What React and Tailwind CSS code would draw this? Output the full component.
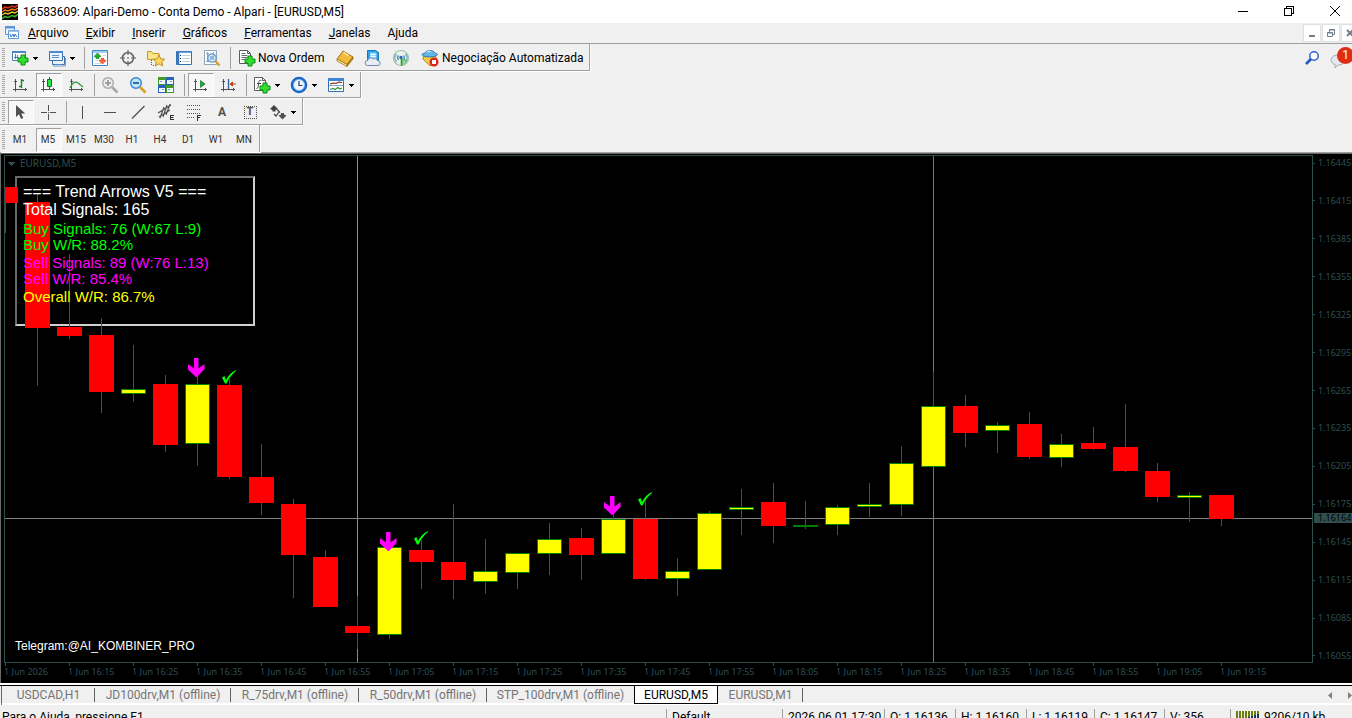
const UI = "font-['Roboto','Open_Sans',sans-serif]"

// [high, bodyTop, bodyBottom, low, rising]
const CANDLES = [
  [187, 187, 203, 233, 0],
  [194, 202, 328, 386, 0],
  [254, 327, 336, 339, 0],
  [318, 335, 392, 413, 0],
  [345, 389, 394, 402, 1],
  [375, 384, 445, 452, 0],
  [376, 384, 444, 466, 1],
  [379, 385, 477, 479, 0],
  [444, 477, 503, 515, 0],
  [499, 504, 555, 598, 0],
  [550, 557, 607, 607, 0],
  [596, 626, 633, 649, 0],
  [547, 547, 635, 639, 1],
  [540, 550, 562, 589, 0],
  [504, 562, 580, 599, 0],
  [539, 571, 582, 594, 1],
  [553, 553, 573, 589, 1],
  [523, 539, 554, 575, 1],
  [528, 538, 555, 580, 0],
  [513, 519, 554, 554, 1],
  [501, 519, 579, 580, 0],
  [558, 571, 579, 596, 1],
  [511, 513, 570, 570, 1],
  [489, 507, 510, 535, 1],
  [483, 502, 526, 543, 0],
  [501, 525, 527, 529, 1],
  [505, 507, 525, 535, 1],
  [483, 504, 507, 517, 1],
  [446, 463, 505, 516, 1],
  [372, 406, 467, 467, 1],
  [395, 406, 433, 447, 0],
  [422, 425, 431, 453, 1],
  [412, 424, 457, 459, 0],
  [434, 444, 458, 467, 1],
  [427, 443, 449, 450, 0],
  [404, 447, 471, 472, 0],
  [463, 471, 497, 502, 0],
  [492, 495, 498, 522, 1],
  [495, 495, 519, 526, 0],
]

const PRICES = [
  '1.16445', '1.16415', '1.16385', '1.16355', '1.16325', '1.16295', '1.16265',
  '1.16235', '1.16205', '1.16175', '1.16145', '1.16115', '1.16085', '1.16055',
]

const TIMES = [
  '2026', '16:15', '16:25', '16:35', '16:45', '16:55', '17:05', '17:15', '17:25', '17:35',
  '17:45', '17:55', '18:05', '18:15', '18:25', '18:35', '18:45', '18:55', '19:05', '19:15',
]

const MENU = ['Arquivo', 'Exibir', 'Inserir', 'Gráficos', 'Ferramentas', 'Janelas', 'Ajuda']

const TIMEFRAMES = ['M1', 'M5', 'M15', 'M30', 'H1', 'H4', 'D1', 'W1', 'MN']

const TABS = [
  { label: 'USDCAD,H1', width: 'w-[93px]' },
  { label: 'JD100drv,M1 (offline)', width: 'w-[136px]' },
  { label: 'R_75drv,M1 (offline)', width: 'w-[128px]' },
  { label: 'R_50drv,M1 (offline)', width: 'w-[128px]' },
  { label: 'STP_100drv,M1 (offline)', width: 'w-[147px]', last: true },
  { label: 'EURUSD,M5', width: 'w-[84px]', active: true },
  { label: 'EURUSD,M1', width: 'w-[85px]' },
]

const STATUS = [
  { text: 'Default', width: 'w-[116px]' },
  { text: '2026.06.01 17:30', width: 'w-[102px]' },
  { text: 'O: 1.16136', width: 'w-[71px]' },
  { text: 'H: 1.16160', width: 'w-[71px]' },
  { text: 'L: 1.16119', width: 'w-[68px]' },
  { text: 'C: 1.16147', width: 'w-[70px]' },
  { text: 'V: 356', width: 'w-[66px]' },
]

function Icon({ children, size = 'size-[18px]', crisp }) {
  return (
    <svg
      viewBox="0 0 18 18"
      className={`${size} shrink-0`}
      fill="none"
      shapeRendering={crisp ? 'crispEdges' : undefined}
      aria-hidden="true"
    >
      {children}
    </svg>
  )
}

/* shared pieces */

function Plus({ x = 7, y = 7 }) {
  return (
    <path
      transform={`translate(${x} ${y})`}
      d="M3.5.5h4v3h3v4h-3v3h-4v-3h-3v-4h3z"
      fill="#2fe02f"
      stroke="#0b8a12"
    />
  )
}

function Axes() {
  return (
    <path d="M4.5 3v12.5M2 13.5h14M3 5.500h3M14.500 12v3" stroke="#505050" />
  )
}

const icons = {
  newChart: (
    <Icon>
      <path d="M1.500 2.500h13v9h-13z" fill="#fff" stroke="#4a7fb8" />
      <path d="M1 3h14" stroke="#4a86c8" strokeWidth="2" />
      <path d="M4.500 5v5M3 8.500h5M6.500 6v3" stroke="#4a7fb8" />
      <Plus x={6.5} y={5.500} />
    </Icon>
  ),
  profiles: (
    <Icon>
      <path d="M4.500 7.500h12v8h-12z" fill="#e8f1fb" stroke="#3c73ad" />
      <path d="M1.500 2.500h13v9h-13z" fill="#eaf3fc" stroke="#3c73ad" />
      <path d="M1 3h14" stroke="#4a8ad0" strokeWidth="2" />
      <path d="M4 6.500h7M4 8.500h7M7 15.500h7" stroke="#5b8fc7" />
      <path d="M5 17h12.500v-8" stroke="#7e9cbc" />
    </Icon>
  ),
  marketWatch: (
    <Icon>
      <path d="M1.500 1.500h15v15h-15z" fill="#fff" stroke="#3f86c6" />
      <path d="M2 3h14" stroke="#a9cdf0" strokeWidth="2" />
      <path d="M4 8.500h4M4 11.500h3M12 6.500h3M4 14.500h6" stroke="#c9d6e3" />
      <path d="M6.500 4l3.500 3.500h-2v2h-3v-2h-2z" fill="#25b425" stroke="#0a7a10" strokeWidth=".6" />
      <path d="M11.500 15l-3.500-3.500h2v-2h3v2h2z" fill="#ff6a35" stroke="#c4320a" strokeWidth=".6" />
    </Icon>
  ),
  dataWindow: (
    <Icon>
      <circle cx="9" cy="9" r="5.500" stroke="#606060" strokeWidth="1.500" />
      <path d="M9 1v5M9 12v5M1 9h5M12 9h5" stroke="#606060" strokeWidth="1.200" />
      <path d="M8 9h2" stroke="#606060" />
    </Icon>
  ),
  navigator: (
    <Icon>
      <path d="M.5 2.500h4l1.500 2h6v6h-11.500z" fill="#fbe58a" stroke="#c79a1a" />
      <path d="M4.500 11v6M6 16.500h3" stroke="#555" strokeDasharray="1 1" />
      <path
        d="M12 6l1.700 3.800 4 .4-3 2.700 1 4-3.700-2.100-3.600 2.100.9-4-3-2.700 4-.4z"
        fill="#fcd95a"
        stroke="#b88612"
        strokeWidth=".9"
      />
    </Icon>
  ),
  terminal: (
    <Icon>
      <path d="M1.500 2.500h15v13h-15z" fill="#fff" stroke="#2f6fb2" />
      <path d="M2 3h14" stroke="#3f86d2" strokeWidth="1.500" />
      <path d="M3 3v12" stroke="#3b78bb" strokeWidth="2.500" />
      <path d="M7 6.500h8M7 9.500h8M7 12.500h8" stroke="#b9cfe6" />
      <path d="M5.500 6v1M5.500 9v1M5.500 12v1" stroke="#222" />
    </Icon>
  ),
  tester: (
    <Icon>
      <path d="M1.500 1.500h12v14h-12z" fill="#fff" stroke="#8da5b8" />
      <path d="M3 4.500h3M4.500 3v10M10.500 3v8M3 12.500h3" stroke="#7aa7d4" />
      <circle cx="9" cy="9" r="4.200" fill="#cfe6fa" fillOpacity=".85" stroke="#6a9bc9" strokeWidth="1.200" />
      <path d="M8 7v4M10 6.500v4" stroke="#5085ba" />
      <path d="M12.200 12.200l4.300 4.300" stroke="#d99a2b" strokeWidth="2.400" />
    </Icon>
  ),
  newOrder: (
    <Icon>
      <path d="M1.500 1.500h8l3 3v10h-11z" fill="#fff" stroke="#5c5c5c" />
      <path d="M9.500 1.500v3h3" stroke="#5c5c5c" />
      <path d="M3.500 4.500h4M3.500 6.500h6M3.500 8.500h6M3.500 10.500h4" stroke="#6b6b6b" />
      <Plus x={6.500} y={6.500} />
    </Icon>
  ),
  book: (
    <Icon>
      <path d="M7 2l10 6-6 7.500L1 10z" fill="#f0bb3e" stroke="#a8720c" />
      <path d="M1 10v2l10 5.500V15.500z" fill="#fff0c0" stroke="#a8720c" strokeWidth=".8" />
      <path d="M11 15.500L17 8v2l-6 7.500z" fill="#c98c17" stroke="#8d5d08" strokeWidth=".6" />
      <path d="M7.500 3.500l5 3" stroke="#fde49a" strokeWidth="1.500" />
    </Icon>
  ),
  cloud: (
    <Icon>
      <path d="M3.500 1.500h8l3 2v8h-11z" fill="#24a4ee" stroke="#1277bd" />
      <path d="M6 3.500h6.500v7H6z" fill="#8fd6fb" />
      <path d="M6.500 5.500h5M6.500 7.500h5" stroke="#fff" />
      <path
        d="M3.500 16.500a2.500 2.500 0 01.2-5 3 3 0 015.300-1.500 3 3 0 014.500 1.700 2.400 2.400 0 01.5 4.800z"
        fill="#e9eef6"
        stroke="#6f88b0"
      />
    </Icon>
  ),
  signals: (
    <Icon>
      <circle cx="9" cy="9" r="7.500" fill="#eaf4ea" stroke="#9cc3a5" strokeWidth="1.200" />
      <path d="M4.500 13a6 6 0 010-8M13.500 5a6 6 0 010 8" stroke="#6ba4cf" strokeWidth="1.300" />
      <path d="M6.500 11a3.500 3.500 0 010-4.500M11.500 6.500a3.500 3.500 0 010 4.500" stroke="#4c86c4" strokeWidth="1.200" />
      <circle cx="9" cy="8.500" r="1.700" fill="#2a66b3" />
      <path d="M9 9v7.500c4-.5 6-3 6.500-6" fill="#4eb54e" fillOpacity=".55" />
      <path d="M9.500 9v7.500" stroke="#2c9a34" strokeWidth="1.600" />
    </Icon>
  ),
  autoTrade: (
    <Icon>
      <path d="M2.500 7h12l1 3-4 6.500h-3L2 10z" fill="#f4c848" stroke="#a97e12" strokeWidth=".9" />
      <path d="M.8 5.500C2 4.500 3.500 4 4.500 4 5.500.5 12.500.5 13.500 4c1 0 2.500.5 3.200 1.500-2 3-13.500 3.500-15.900 0z" fill="#63b7e8" stroke="#2f7fae" />
      <path d="M6 3.500c1-1.500 3-1.500 4-1" stroke="#c9e9fb" strokeWidth="1.200" />
      <circle cx="13" cy="13" r="4.500" fill="#dd2618" />
      <path d="M11 11h4v4h-4z" fill="#fff" />
    </Icon>
  ),
  bars: (
    <Icon>
      <Axes />
      <path d="M10.500 3v9M8 10.500h2M11 4.500h2" stroke="#12882a" strokeWidth="1.400" />
    </Icon>
  ),
  candles: (
    <Icon>
      <Axes />
      <path d="M10.500 1v12" stroke="#12762a" />
      <path d="M8.500 3.500h4v7h-4z" fill="#2ee04a" stroke="#12762a" />
    </Icon>
  ),
  line: (
    <Icon>
      <Axes />
      <path d="M3 12c2-5 5-7 8-5l5 4" stroke="#2a9a3c" strokeWidth="1.200" />
    </Icon>
  ),
  zoomIn: (
    <Icon>
      <circle cx="7" cy="7" r="5.300" fill="#ededed" stroke="#a8a8a8" strokeWidth="1.400" />
      <path d="M4 7h6M7 4v6" stroke="#8f8f8f" strokeWidth="1.600" />
      <path d="M11 11l5.500 5.500" stroke="#a8a8a8" strokeWidth="2.600" />
    </Icon>
  ),
  zoomOut: (
    <Icon>
      <circle cx="7" cy="7" r="5.300" fill="#c4e4fb" stroke="#2f86cc" strokeWidth="1.400" />
      <path d="M4 7h6" stroke="#1d5f9c" strokeWidth="1.800" />
      <path d="M11 11l5.500 5.500" stroke="#d8a021" strokeWidth="2.600" />
    </Icon>
  ),
  tile: (
    <Icon crisp>
      <path d="M1 1h8v8H1zM9 9h8v8H9z" fill="#3f9c28" />
      <path d="M9 1h8v8H9zM1 9h8v8H1z" fill="#2a62b8" />
      <path d="M2 4h6v4H2zM10 4h6v4h-6zM2 12h6v4H2zM10 12h6v4h-6z" fill="#f4f8ff" />
      <path d="M3 5h2v1H3zM13 5h2v1h-2zM5 13h2v1H5zM11 13h2v1h-2z" fill="#7a9cc8" />
    </Icon>
  ),
  autoScroll: (
    <Icon>
      <Axes />
      <path d="M9.500 4.500v7l4.500-3.500z" fill="#1da53a" stroke="#0f7a28" strokeWidth=".7" />
    </Icon>
  ),
  shift: (
    <Icon>
      <Axes />
      <path d="M9.500 3v10" stroke="#2b66a8" strokeWidth="1.400" />
      <path d="M11 8l2.500-2v4zM13 8h4" fill="#c2410c" stroke="#c2410c" strokeWidth="1" />
    </Icon>
  ),
  indicators: (
    <Icon>
      <path d="M1.500 1.500h8l3 3v10h-11z" fill="#fff" stroke="#5c5c5c" />
      <path d="M9.500 1.500v3h3" stroke="#5c5c5c" />
      <path d="M8.500 4.500c-3-1-2.500 1-3 4s-.5 4-2 4M4 7.500h4" stroke="#444" />
      <Plus x={6.500} y={6.500} />
    </Icon>
  ),
  periods: (
    <Icon>
      <circle cx="9" cy="9" r="7" fill="#edf6ff" stroke="#1b66c4" strokeWidth="2.600" />
      <circle cx="9" cy="9" r="5.500" stroke="#7fb6ee" strokeWidth=".8" />
      <path d="M9 5v4.500h3.500" stroke="#2b3f5c" strokeWidth="1.200" />
    </Icon>
  ),
  templates: (
    <Icon>
      <path d="M1.500 2.500h15v13h-15z" fill="#fff" stroke="#2f6fb2" />
      <path d="M1 3.500h16" stroke="#3f86d2" strokeWidth="3" />
      <path d="M2 9.500h14" stroke="#7aa7d4" />
      <path d="M3 8l3-1 3 .500 3-1.500 3 .5" stroke="#7a1d14" strokeWidth="1.200" />
      <path d="M3 13.500l3-1 2 1 3-2 2 1.500 2-1" stroke="#2e9440" strokeWidth="1.200" />
    </Icon>
  ),
  cursor: (
    <Icon>
      <path d="M5 2v12l3-2.700L10 16l2.300-1-2-4.500h4z" fill="#505050" />
    </Icon>
  ),
  crosshair: (
    <Icon crisp>
      <path d="M9.500 2v6M9.500 11v6M2 9.500h6M11 9.500h6M9 9.500h1" stroke="#505050" />
    </Icon>
  ),
  vline: (
    <Icon crisp>
      <path d="M9.500 3v13" stroke="#505050" />
    </Icon>
  ),
  hline: (
    <Icon crisp>
      <path d="M3 9.500h12" stroke="#505050" />
    </Icon>
  ),
  trend: (
    <Icon>
      <path d="M3 15.500L15.500 3" stroke="#505050" strokeWidth="1.200" />
    </Icon>
  ),
  channel: (
    <Icon>
      <path d="M1 10L14 2M2 14l11-7M3 15L7 4M6 14L10 2M9 12L13 1" stroke="#505050" strokeWidth="1.200" />
      <path d="M13.500 12.500h3.500M13.500 14.500h3M13.500 16.500h3.500M13.500 12v5" stroke="#303030" />
    </Icon>
  ),
  fibo: (
    <Icon crisp>
      <path d="M2 2.500h14M2 6.500h14M2 10.500h14M2 14.500h8" stroke="#505050" strokeDasharray="1 1" />
      <path d="M12.500 12v5.500M12 12.500h4M12 14.500h3" stroke="#303030" />
    </Icon>
  ),
  shapes: (
    <Icon>
      <path d="M5 2l4 4-2.500 1v1.500h-3V7L1 6z" fill="#404040" />
      <path d="M5 11l2 2 3-4M8 6.500l3 3" stroke="#404040" strokeWidth="1.200" />
      <path d="M9.500 12.500L12 11.500V10h3v1.500l2.500 1-4 4z" fill="#505050" />
    </Icon>
  ),
}

function Caret() {
  return (
    <svg viewBox="0 0 5 3" className="h-[3px] w-[5px] shrink-0" shapeRendering="crispEdges" aria-hidden="true">
      <path d="M0 0h5v1H4v1H3v1H2V2H1V1H0z" fill="#000" />
    </svg>
  )
}

function ToolButton({ label, icon, drop, pressed, children }) {
  const look = pressed
    ? 'border border-t-[#a0a0a0] border-l-[#a0a0a0] border-r-white border-b-white bg-[#f7f7f7]'
    : 'border border-transparent'
  return (
    <button
      type="button"
      aria-label={label}
      aria-pressed={pressed}
      className={`mx-px flex h-6 items-center justify-center gap-1 pr-0.5 ${drop ? 'w-[35px]' : 'w-[26px]'} ${look}`}
    >
      {icon ? icons[icon] : children}
      {drop && <Caret />}
    </button>
  )
}

function Sep() {
  return (
    <span className="flex h-[22px] w-1.5 justify-center">
      <span className="w-px bg-[#a0a0a0]" />
    </span>
  )
}

function Toolbar({ label, last, children }) {
  return (
    <div
      role="toolbar"
      aria-label={label}
      className={`flex h-[27px] w-fit items-center border-r border-[#a0a0a0] pt-0.5 pl-0.5 shadow-[1px_1px_0_#fff] ${
        last ? '' : 'border-b'
      }`}
    >
      <span className="mr-0.5 h-5 w-[3px] bg-[repeating-linear-gradient(#a8a8a8_0_1px,#f0f0f0_1px_2px)]" />
      {children}
    </div>
  )
}

function TitleBar() {
  return (
    <header className="flex h-[23px] shrink-0 items-center bg-white pl-0.5">
      <svg viewBox="0 0 16 16" className="size-4" fill="none" aria-hidden="true">
        <path d="M0 0h16v16H0z" fill="#000" />
        <path d="M0 5l3-2 3 1 4-2 3 1 3-2" stroke="#e02a14" strokeWidth="1.600" />
        <path d="M0 8l3-2 3 1 4-2 3 1 3-2" stroke="#f07a18" strokeWidth="1.400" />
        <path d="M0 11l3-2 3 1 4-2 3 1 3-2" stroke="#e8c832" strokeWidth="1.400" />
        <path d="M0 14.500l3-2 3 1 4-2 3 1 3-2" stroke="#38b02a" strokeWidth="1.600" />
      </svg>
      <h1 className="ml-[5px] flex-1 text-[12px] leading-4">
        16583609: Alpari-Demo - Conta Demo - Alpari - [EURUSD,M5]
      </h1>
      <div className="flex gap-[30px] pr-[9px]">
        <button type="button" aria-label="Minimizar" className="size-4">
          <svg viewBox="0 0 16 16" fill="none" stroke="#000" shapeRendering="crispEdges">
            <path d="M3 7.500h10" />
          </svg>
        </button>
        <button type="button" aria-label="Restaurar" className="size-4">
          <svg viewBox="0 0 16 16" fill="none" stroke="#000" shapeRendering="crispEdges">
            <path d="M3.500 4.500h7v7h-7zM5.500 4.500v-2h7v7h-2" />
          </svg>
        </button>
        <button type="button" aria-label="Fechar" className="size-4">
          <svg viewBox="0 0 16 16" fill="none" stroke="#000">
            <path d="M3 2l10 10M13 2L3 12" />
          </svg>
        </button>
      </div>
    </header>
  )
}

function MenuBar() {
  const box = 'flex size-[18px] items-center justify-center border border-[#e0e0e0] bg-white'
  return (
    <nav className="flex h-[21px] shrink-0 items-center overflow-hidden border-b border-[#a0a0a0] pl-1">
      <svg viewBox="0 0 16 16" className="size-4" fill="none" aria-hidden="true">
        <path d="M1.500 1.500h9v8h-9z" fill="#eaf3fd" stroke="#5b96d8" />
        <path d="M1 2.500h10" stroke="#5b96d8" strokeWidth="2" />
        <path d="M4.500 5.500h10v8h-10z" fill="#fff" stroke="#5b96d8" />
        <path d="M4 6h11" stroke="#7fb0e6" strokeWidth="1.500" />
        <path d="M6 9l1 3 2-3 1 3 1-3 2 3" stroke="#3f7cc4" />
      </svg>
      <ul className="ml-2 flex flex-1 gap-[17px] text-[12px] leading-4">
        {MENU.map((item) => (
          <li key={item}>
            <button type="button">
              {item === 'Ajuda' ? (
                <>
                  A<u>j</u>uda
                </>
              ) : (
                <>
                  <u>{item[0]}</u>
                  {item.slice(1)}
                </>
              )}
            </button>
          </li>
        ))}
      </ul>
      <div className="-mr-[7px] flex gap-px">
        <button type="button" aria-label="Minimizar gráfico" className={box}>
          <svg viewBox="0 0 10 10" className="size-2.5" stroke="#70808f" fill="none">
            <path d="M2 8h6" strokeWidth="2" />
          </svg>
        </button>
        <button type="button" aria-label="Restaurar gráfico" className={box}>
          <svg viewBox="0 0 10 10" className="size-2.5" stroke="#70808f" fill="none">
            <path d="M1.500 4.500h5v4h-5zM1 5h6M3.500 4V1.500h5v5H7M3 2h6" />
          </svg>
        </button>
        <button type="button" aria-label="Fechar gráfico" className={box}>
          <svg viewBox="0 0 10 10" className="size-2.5" stroke="#70808f" fill="none">
            <path d="M2 2l6 6M8 2L2 8" strokeWidth="2" />
          </svg>
        </button>
      </div>
    </nav>
  )
}

function Toolbars() {
  return (
    <div className="shrink-0 border-b border-[#a0a0a0]">
      <div className="flex items-center justify-between">
        <Toolbar label="Padrão">
          <ToolButton label="Novo gráfico" icon="newChart" drop />
          <ToolButton label="Perfis" icon="profiles" drop />
          <Sep />
          <ToolButton label="Observação do mercado" icon="marketWatch" />
          <ToolButton label="Janela de dados" icon="dataWindow" />
          <ToolButton label="Navegador" icon="navigator" />
          <ToolButton label="Terminal" icon="terminal" />
          <ToolButton label="Testador" icon="tester" />
          <Sep />
          <button type="button" className="flex h-6 w-[99px] items-center gap-0.5 pl-[5px] text-[12px] leading-4 whitespace-nowrap">
            {icons.newOrder}
            Nova Ordem
          </button>
          <ToolButton label="MetaEditor" icon="book" />
          <ToolButton label="Nuvem" icon="cloud" />
          <ToolButton label="Sinais" icon="signals" />
          <button type="button" className="flex h-6 w-[173px] items-center gap-[3px] pl-[5px] text-[12px] leading-4 whitespace-nowrap">
            {icons.autoTrade}
            Negociação Automatizada
          </button>
        </Toolbar>
        <div className="flex items-center gap-2.5">
          <button type="button" aria-label="Pesquisar" className="size-4">
            <svg viewBox="0 0 16 16" fill="none">
              <circle cx="10" cy="6" r="4.200" fill="#fff" stroke="#2d62d0" strokeWidth="1.500" />
              <path d="M7 9l-5 5" stroke="#2458c4" strokeWidth="2.600" />
            </svg>
          </button>
          <button type="button" aria-label="Notificações" className="relative h-6 w-[22px]">
            <svg viewBox="0 0 22 24" className="h-6 w-[22px]" fill="none">
              <path d="M8 9c9 0 9 10 0 10l-3 3v-3.500C-1 17 0 9 8 9z" fill="#e6e6ee" stroke="#a6a6b0" />
            </svg>
            <span className="absolute top-px left-[7px] flex size-[17px] items-center justify-center rounded-full bg-[#df2d14] text-[12px] leading-4 text-white">
              1
            </span>
          </button>
        </div>
      </div>
      <Toolbar label="Gráficos">
        <ToolButton label="Barras" icon="bars" />
        <ToolButton label="Velas" icon="candles" pressed />
        <ToolButton label="Linha" icon="line" />
        <Sep />
        <ToolButton label="Ampliar" icon="zoomIn" />
        <ToolButton label="Reduzir" icon="zoomOut" />
        <ToolButton label="Lado a lado" icon="tile" />
        <Sep />
        <ToolButton label="Rolagem automática" icon="autoScroll" pressed />
        <ToolButton label="Deslocar gráfico" icon="shift" />
        <Sep />
        <ToolButton label="Indicadores" icon="indicators" drop />
        <ToolButton label="Períodos" icon="periods" drop />
        <ToolButton label="Modelos" icon="templates" drop />
      </Toolbar>
      <Toolbar label="Estudos">
        <ToolButton label="Cursor" icon="cursor" pressed />
        <ToolButton label="Mira" icon="crosshair" />
        <Sep />
        <ToolButton label="Linha vertical" icon="vline" />
        <ToolButton label="Linha horizontal" icon="hline" />
        <ToolButton label="Linha de tendência" icon="trend" />
        <ToolButton label="Canal equidistante" icon="channel" />
        <ToolButton label="Fibonacci" icon="fibo" />
        <ToolButton label="Texto">
          <span className="text-[12px] leading-4 font-bold text-[#505050]">A</span>
        </ToolButton>
        <ToolButton label="Etiqueta">
          <span className="flex size-[13px] items-center justify-center border border-dotted border-[#505050] text-[11px] leading-3 font-bold text-[#505050]">
            T
          </span>
        </ToolButton>
        <ToolButton label="Setas" icon="shapes" drop />
      </Toolbar>
      <Toolbar label="Períodos" last>
        {TIMEFRAMES.map((tf) => (
          <ToolButton key={tf} label={tf} pressed={tf === 'M5'}>
            <span className="text-[10px] leading-3 text-[#303030]">{tf}</span>
          </ToolButton>
        ))}
      </Toolbar>
    </div>
  )
}

function Candle({ x, data }) {
  const [high, top, bottom, low, rising] = data
  const color = rising ? '#008000' : '#ff0000'
  return (
    <g>
      <rect x={x} y={high} width="1" height={low - high} fill={color} />
      <rect x={x - 12} y={top} width="25" height={bottom - top} fill={color} />
      {rising && bottom - top > 2 ? (
        <rect x={x - 11} y={top + 1} width="23" height={bottom - top - 2} fill="#ffff00" />
      ) : null}
    </g>
  )
}

function SellArrow({ x, y }) {
  return (
    <path
      transform={`translate(${x} ${y})`}
      d="M6 0h4.500v10.500L16.500 6v5L9 19H8L0 11.500V6l6 4.500z"
      fill="#ff00ff"
    />
  )
}

function WinTick({ x, y }) {
  return (
    <path
      transform={`translate(${x} ${y})`}
      d="M0 7.500L2.500 6l1.500 4C6.500 5.500 9.500 2 14 0v1C10 4 7 8.500 4.500 13.500H3z"
      fill="#00ff00"
    />
  )
}

function InfoPanel() {
  return (
    <div className="absolute top-[27px] left-[18px] font-['Liberation_Sans',Arial,sans-serif] text-[15px] leading-4 whitespace-nowrap">
      <p className="text-[16px] leading-[18px] text-white">=== Trend Arrows V5 ===</p>
      <p className="text-[16px] leading-[18px] text-white">Total Signals: 165</p>
      <p className="mt-0.5 text-[#00ff00]">Buy Signals: 76 (W:67 L:9)</p>
      <p className="text-[#00ff00]">Buy W/R: 88.2%</p>
      <p className="mt-0.5 text-[#ff00ff]">Sell Signals: 89 (W:76 L:13)</p>
      <p className="text-[#ff00ff]">Sell W/R: 85.4%</p>
      <p className="mt-0.5 text-[#ffff00]">Overall W/R: 86.7%</p>
    </div>
  )
}

function Chart() {
  return (
    <main className="flex min-h-0 flex-1 flex-col overflow-hidden border-t border-l border-[#696969] bg-black pt-px pl-[3px] font-['Noto_Sans',sans-serif] text-[9px] leading-[10px] text-[#2f4f4f]">
      <div className="flex min-h-0 flex-1">
        <div className="relative min-w-0 flex-1 overflow-hidden border border-[#2f4f4f]">
          <div className="absolute top-[20px] left-[10px] h-[150px] w-[240px] border-2 border-t-[#696969] border-r-[#d0d0d0] border-b-[#d0d0d0] border-l-[#696969]" />
          <svg className="absolute inset-0 size-full">
            <g transform="translate(-5 -156)">
              <g shapeRendering="crispEdges">
                <rect x="5" y="518" width="100%" height="1" fill="#808080" />
                <rect x="357" y="156" width="1" height="506" fill="#32cd32" />
                <rect x="933" y="156" width="1" height="506" fill="#ff4500" />
                {CANDLES.map((c, i) => (
                  <Candle key={i} x={5 + i * 32} data={c} />
                ))}
                <path d="M8 162h7v1h-1v1h-1v1h-1v1h-1v-1h-1v-1H9v-1H8z" fill="#2f4f4f" />
              </g>
              <SellArrow x={188} y={358} />
              <SellArrow x={380} y={532} />
              <SellArrow x={604} y={496} />
              <WinTick x={222} y={370} />
              <WinTick x={414} y={531} />
              <WinTick x={638} y={492} />
            </g>
          </svg>
          <p className="absolute top-0.5 left-[15px] text-[10px]">EURUSD,M5</p>
          <InfoPanel />
          <p className="absolute bottom-2 left-2.5 font-['Liberation_Sans',Arial,sans-serif] text-[12px] leading-4 text-white">
            Telegram:@AI_KOMBINER_PRO
          </p>
        </div>
        <div className="relative flex w-[39px] shrink-0 flex-col justify-between pt-[3px] pb-0.5">
          {PRICES.map((p) => (
            <span key={p} className="flex items-center gap-[3px]">
              <span className="h-px w-0.5 shrink-0 bg-[#2f4f4f]" />
              {p}
            </span>
          ))}
          <span className="absolute top-[358px] right-0 left-px bg-[#2f4f4f] pl-1 text-black">1.16164</span>
        </div>
      </div>
      <div className="flex h-[20px] shrink-0">
        {TIMES.map((t) => (
          <span key={t} className="w-16 shrink-0 whitespace-nowrap">
            <span className="ml-px block h-[3px] w-px bg-[#2f4f4f]" />
            <span className="block pt-px">1 Jun {t}</span>
          </span>
        ))}
      </div>
    </main>
  )
}

function ChartTabs() {
  return (
    <div className="flex h-[22px] shrink-0 items-start border-y-2 border-white">
      <div className="flex h-5 flex-1 items-center border-t border-black pl-px text-[12px] leading-4">
        <div role="tablist" className="flex h-full items-start border-l border-[#696969]">
          {TABS.map((tab) => (
            <button
              key={tab.label}
              type="button"
              role="tab"
              aria-selected={Boolean(tab.active)}
              className={
                tab.active
                  ? `-mt-px h-[19px] border border-black bg-white text-black ${tab.width}`
                  : `relative h-[17px] text-[#757575] ${tab.width}`
              }
            >
              {tab.label}
              {!tab.active && !tab.last && <span className="absolute top-0.5 right-0 h-3.5 w-px bg-[#606060]" />}
            </button>
          ))}
        </div>
        <div className="ml-auto flex items-center gap-4">
          <button type="button" aria-label="Abas anteriores">
            <svg viewBox="0 0 4 7" className="h-[7px] w-1" fill="#808080">
              <path d="M4 0v7L0 3.500z" />
            </svg>
          </button>
          <button type="button" aria-label="Próximas abas">
            <svg viewBox="0 0 4 7" className="h-[7px] w-1" fill="#808080">
              <path d="M0 0v7l4-3.500z" />
            </svg>
          </button>
        </div>
      </div>
    </div>
  )
}

function StatusBar() {
  return (
    <footer className="flex h-[13px] shrink-0 items-start overflow-hidden pt-1 text-[12px] leading-4 whitespace-nowrap">
      <span className="flex-1 pl-0.5">Para o Ajuda, pressione F1</span>
      {STATUS.map((s) => (
        <span key={s.text} className={`border-l border-[#a0a0a0] pl-[5px] ${s.width}`}>
          {s.text}
        </span>
      ))}
      <span className="flex w-[122px] gap-1 border-l border-[#a0a0a0] pl-[5px]">
        <svg viewBox="0 0 24 12" className="mt-0.5 h-3 w-6" shapeRendering="crispEdges" aria-hidden="true">
          <path d="M0 0h2v12H0zM3 0h2v12H3zM6 0h2v12H6zM9 0h2v12H9zM12 0h2v12h-2zM15 0h2v12h-2zM18 0h2v12h-2zM21 0h2v12h-2z" fill="#6b7d0e" />
          <path d="M12 6h2v6h-2zM15 5h2v7h-2zM18 4h2v8h-2zM21 3h2v9h-2z" fill="#0f3d5c" />
        </svg>
        9206/10 kb
      </span>
    </footer>
  )
}

export default function App() {
  return (
    <div className={`flex h-screen flex-col overflow-hidden bg-[#f0f0f0] text-black ${UI}`}>
      <TitleBar />
      <MenuBar />
      <Toolbars />
      <Chart />
      <ChartTabs />
      <StatusBar />
    </div>
  )
}
